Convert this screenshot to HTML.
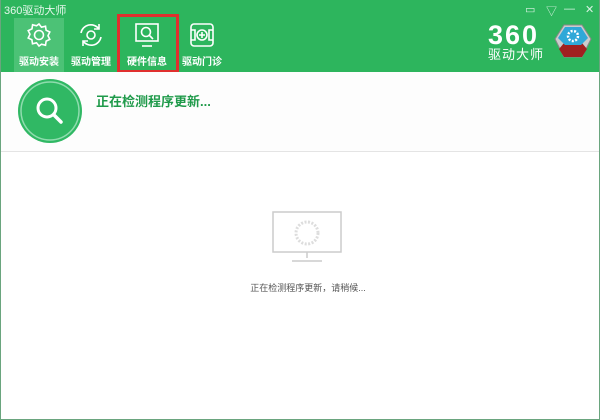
<!DOCTYPE html>
<html><head><meta charset="utf-8"><style>
*{margin:0;padding:0;box-sizing:border-box}
body{width:600px;height:420px;overflow:hidden;background:#fff;font-family:"Liberation Sans","Noto Sans CJK SC",sans-serif;position:relative}
.win{position:absolute;left:0;top:0;width:600px;height:420px;border:1px solid #6aa57e;border-top:none}
.hdr{position:absolute;left:0;top:0;width:600px;height:72px;background:#2db55d}
.title{position:absolute;left:4px;top:2px;color:#e6f7ec;font-size:11px}
.tab{position:absolute;top:18px;width:50px;height:54px;color:#fff;font-size:10px;font-weight:bold;text-align:center}
.tab svg{position:absolute;left:12px;top:4px}
.tab span{position:absolute;left:0;width:50px;top:35px}
.sel{background:#4cc276}
.red{position:absolute;left:117px;top:14px;width:62px;height:59px;border:3px solid #e0302e}
.ctl{position:absolute;top:3px;color:#d8f2e2;font-size:11px}
.logo{position:absolute;left:488px;top:24px;color:#fff}
.body{position:absolute;left:1px;top:72px;width:598px;height:80px;border-bottom:1px solid #e4e4e4;background:#fdfdfd}
.msg{position:absolute;left:95px;top:19px;color:#1f9a4a;font-size:13px;font-weight:bold}
.small{position:absolute;left:8px;width:600px;top:281px;text-align:center;font-size:9px;color:#555}
</style></head><body>
<div class="hdr">
<div class="title">360驱动大师</div>
<div class="tab sel" style="left:14px"><svg width="26" height="26" viewBox="0 0 26 26" fill="none" stroke="#fff" stroke-width="1.6"><path d="M13 2l2.5 3.2 4-1 .6 4 3.7 1.8-1.8 3.7 1.8 3.7-3.7 1.8-.6 4-4-1L13 24l-2.5-3.2-4 1-.6-4L2.2 16 4 12.3 2.2 8.6 6 6.8l.6-4 4 1z"/><circle cx="13" cy="13" r="4.5"/></svg><span>驱动安装</span></div>
<div class="tab" style="left:66px"><svg width="26" height="26" viewBox="0 0 26 26" fill="none" stroke="#fff" stroke-width="1.6"><path d="M3 11a10 10 0 0 1 18-4"/><path d="M23 15a10 10 0 0 1-18 4"/><path d="M21 2v5h-5M5 24v-5h5"/><circle cx="13" cy="13" r="4"/></svg><span>驱动管理</span></div>
<div class="tab" style="left:122px"><svg width="26" height="26" viewBox="0 0 26 26" fill="none" stroke="#fff" stroke-width="1.6"><rect x="2" y="2" width="22" height="17"/><path d="M8 24h10"/><circle cx="12" cy="10" r="4.5"/><path d="M15 13l4 4"/></svg><span>硬件信息</span></div>
<div class="tab" style="left:177px"><svg width="26" height="26" viewBox="0 0 26 26" fill="none" stroke="#fff" stroke-width="1.6"><rect x="2" y="2" width="22" height="22" rx="3"/><path d="M2 8h4v10H2M24 8h-4v10h4"/><circle cx="13" cy="13" r="5"/><path d="M13 10v6M10 13h6"/></svg><span>驱动门诊</span></div>
<div class="red"></div>
<div class="ctl" style="left:525px">▭</div>
<div class="ctl" style="left:546px">▽</div>
<div class="ctl" style="left:564px">—</div>
<div class="ctl" style="left:585px">✕</div>
<div class="logo"><div style="font-size:27px;font-weight:bold;letter-spacing:2px;line-height:23px">360</div><div style="font-size:13px;line-height:16px;letter-spacing:1px">驱动大师</div></div>
<svg style="position:absolute;left:554px;top:23px" width="38" height="36" viewBox="0 0 38 36"><polygon points="10,2 28,2 37,16 28,34 10,34 1,16" fill="#ccc" stroke="#888"/><polygon points="10,20 28,20 33,26 28,34 10,34 5,26" fill="#a02020"/><polygon points="11,4 27,4 34,15 27,22 11,22 4,15" fill="#2fa8d8"/><circle cx="19" cy="13" r="5" fill="none" stroke="#fff" stroke-width="2.5" stroke-dasharray="2 1.5"/></svg>
</div>
<div class="body">
<svg style="position:absolute;left:16px;top:6px" width="66" height="66" viewBox="0 0 66 66"><circle cx="33" cy="33" r="32" fill="#30b864"/><circle cx="33" cy="33" r="29" fill="none" stroke="#8fdcae" stroke-width="1.5"/><circle cx="30" cy="30" r="9" fill="none" stroke="#fff" stroke-width="3"/><path d="M37 37l7 7" stroke="#fff" stroke-width="3.5" stroke-linecap="round"/></svg>
<div class="msg">正在检测程序更新...</div>
</div>
<svg style="position:absolute;left:272px;top:211px" width="70" height="54" viewBox="0 0 70 54" fill="none" stroke="#ccc" stroke-width="1.5"><rect x="1" y="1" width="68" height="40"/><path d="M35 41v6M20 50h30"/><circle cx="35" cy="22" r="11" stroke="#ddd" stroke-width="3" stroke-dasharray="2 1.5"/></svg>
<div class="small">正在检测程序更新，请稍候...</div>
<div class="win"></div>
</body></html>
